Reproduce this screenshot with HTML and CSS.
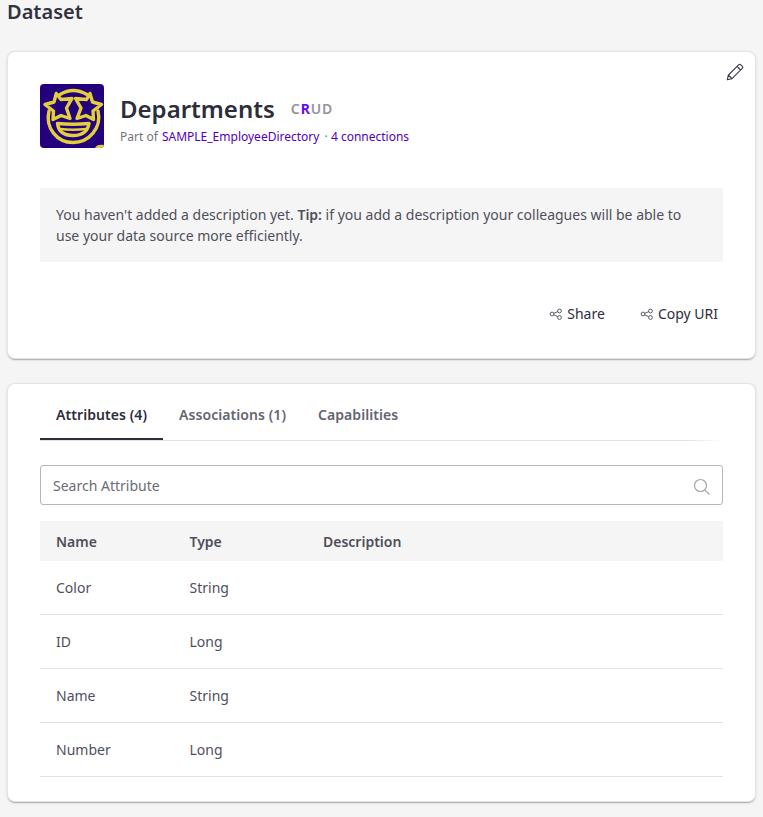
FILE: index.html
```html
<!DOCTYPE html>
<html lang="en">
<head>
<meta charset="utf-8">
<title>Dataset</title>
<link rel="stylesheet" href="styles.css">
</head>
<body>
<h1 class="page-title">Dataset</h1>
<section class="card summary">
  <button class="edit" aria-label="Edit">
    <svg width="18" height="18" viewBox="0 0 18 18"><path d="M1.3 16.7l1.1-4.7L12.6 1.8q1.1-1 2.2 0l1.4 1.4q1.1 1.1 0 2.2L6 15.6zM2.4 12l3.6 3.6M11 3.4L14.6 7"/></svg>
  </button>
  <header class="head">
    <svg class="avatar" viewBox="0 0 64 64">
      <rect width="64" height="64" fill="#23007c"/>
      <g fill="none" stroke="#e3cf3c" stroke-width="3.400" stroke-linejoin="round" stroke-linecap="round">
        <path d="M20 10.500Q33 2.500 47 10.500M9 27C5 44 17 58.500 33 58.500S62 44 58 27"/>
        <path d="M16.300 9.500l4.700 6 11-1-5.500 9.500 3.500 10.500-9-3-8 4 .5-8.500-8.500-6.500 9-2.500z"/>
        <path d="M50 9.500l-3.500 6-11-1 5.500 9.500-4 10.500 9-3 7.500 4-.5-8.500 8.500-6.500-9-2.500z"/>
        <path d="M17.500 39.500Q33 41 49 39.500Q47 51.500 33 51.500T17.500 39.500z"/>
        <path d="M20 45Q33 46.500 46 45" stroke-width="2.500"/>
      </g>
      <path d="M55 64q2-4 9-3v3z" fill="#e3cf3c"/>
    </svg>
    <div>
      <div class="title-row"><h2>Departments</h2><span class="crud">C<b>R</b>UD</span></div>
      <p class="sub">Part of <a class="source">SAMPLE_EmployeeDirectory</a> · <a>4 connections</a></p>
    </div>
  </header>
  <p class="notice">You haven't added a description yet. <b>Tip:</b> if you add a description your colleagues will be able to use your data source more efficiently.</p>
  <div class="actions">
    <button><svg class="share" viewBox="0 0 14 12"><circle cx="3" cy="6" r="1.900"/><circle cx="10.500" cy="3" r="1.900"/><circle cx="10.500" cy="9.500" r="1.900"/><path d="M4.800 5.300l3.900-1.600M4.800 6.800l3.900 1.900"/></svg><span>Share</span></button>
    <button><svg class="share" viewBox="0 0 14 12"><circle cx="3" cy="6" r="1.900"/><circle cx="10.500" cy="3" r="1.900"/><circle cx="10.500" cy="9.500" r="1.900"/><path d="M4.800 5.300l3.900-1.600M4.800 6.800l3.900 1.900"/></svg><span>Copy URI</span></button>
  </div>
</section>
<section class="card details">
  <nav class="tabs"><a class="active">Attributes (4)</a><a>Associations (1)</a><a>Capabilities</a></nav>
  <label class="search"><input type="text" placeholder="Search Attribute"><svg width="18" height="18" viewBox="0 0 18 18"><circle cx="7.500" cy="7.500" r="6"/><path d="M11.800 11.800l4.700 4.700"/></svg></label>
  <table>
    <thead><tr><th>Name</th><th>Type</th><th>Description</th></tr></thead>
    <tbody>
      <tr><td>Color</td><td>String</td><td></td></tr>
      <tr><td>ID</td><td>Long</td><td></td></tr>
      <tr><td>Name</td><td>String</td><td></td></tr>
      <tr><td>Number</td><td>Long</td><td></td></tr>
    </tbody>
  </table>
</section>
</body>
</html>
```
FILE: styles.css
```css
* { box-sizing: border-box; }
body {
  margin: 0;
  min-height: 817px;
  padding: 0 8px;
  background: #f5f5f5;
  color: #4f4f5b;
  font: 14px/21px "Noto Sans", sans-serif;
}
h1, h2, p { margin: 0; }
button { border: 0; background: none; padding: 0; font: inherit; color: #2d2d3b; }
svg { display: block; fill: none; }
.page-title { height: 52px; margin-left: -1px; font-size: 20px; line-height: 24px; font-weight: 600; color: #333340; }
.card {
  position: relative;
  width: 747px;
  padding: 32px;
  background: #fff;
  border-radius: 7px;
  box-shadow: 0 0 0 1px #e4e4e4, 0 1px 3px 1px rgba(0, 0, 0, .12), 0 2px 1px rgba(0, 0, 0, .22);
}
.summary { height: 306px; }
.edit { position: absolute; right: 11px; top: 11px; }
.edit svg { stroke: #3c3c4a; stroke-width: 1.1; stroke-linejoin: round; }
.head { display: flex; gap: 16px; height: 64px; }
.avatar { width: 64px; height: 64px; border-radius: 4px; }
.title-row { display: flex; align-items: center; gap: 16px; height: 36px; margin-top: 7px; }
h2 { font-size: 24px; line-height: 36px; font-weight: 600; color: #2d2d3b; }
.crud { margin-top: -2px; font-weight: 600; letter-spacing: .9px; color: #94949c; }
.crud b { color: #6a0be8; font-weight: 700; }
.sub { margin-top: 1px; font-size: 12px; line-height: 18px; color: #73737d; white-space: pre; }
.sub a { color: #5200bd; }
.sub .source { margin: 0 2px 0 1px; }
.notice { width: 683px; height: 74px; margin-top: 40px; padding: 16px; background: #f5f5f5; }
.notice b { font-weight: 600; }
.actions { display: flex; justify-content: flex-end; gap: 35px; margin: 41px 5px 0 0; }
.actions button { display: flex; align-items: center; gap: 4px; }
.share { width: 14px; height: 12px; stroke: #4b4b58; stroke-width: .9; }
.details { height: 417px; margin-top: 26px; padding-top: 0; }
.tabs {
  display: flex;
  width: 683px;
  height: 57px;
  background: linear-gradient(90deg, #e2e2e5 95%, transparent) bottom / 100% 1px no-repeat;
}
.tabs a { height: 56px; padding: 20px 16px 0; font-weight: 600; letter-spacing: .07px; color: #656571; }
.tabs .active { color: #2d2d3b; border-bottom: 2px solid #2d2d3b; }
.search {
  display: flex;
  align-items: center;
  width: 683px;
  height: 40px;
  margin-top: 24px;
  padding: 0 11px 0 12px;
  border: 1px solid #b5b5bd;
  border-radius: 3px;
}
.search input { flex: 1; padding: 0; border: 0; outline: 0; background: none; font: inherit; }
.search input::placeholder { color: #6b6b75; opacity: 1; }
.search svg { stroke: #a3a3ad; stroke-width: 1.2; margin-top: 4px; }
table { width: 683px; margin-top: 16px; border-collapse: separate; border-spacing: 0; table-layout: fixed; }
th { width: 133.5px; height: 40px; padding: 1px 16px 0; text-align: left; font-weight: 600; background: #f5f5f5; }
th:last-child { width: auto; }
td { height: 54px; padding: 0 16px; border-bottom: 1px solid #e2e2e2; }
```
